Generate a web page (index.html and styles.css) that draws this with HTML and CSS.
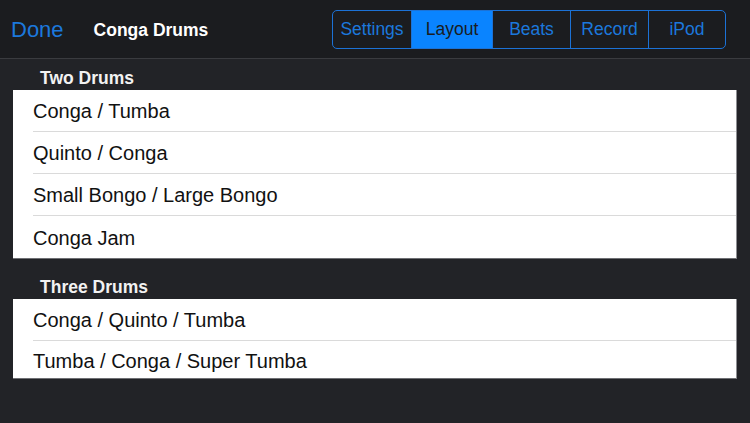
FILE: index.html
```html
<!DOCTYPE html>
<html>
<head>
<meta charset="utf-8">
<link rel="stylesheet" href="styles.css">
</head>
<body>
<div class="navbar">
  <span class="done">Done</span>
  <span class="title">Conga Drums</span>
  <div class="spacer"></div>
  <div class="segmented">
    <div class="seg w79">Settings</div>
    <div class="seg w81 active">Layout</div>
    <div class="seg w78">Beats</div>
    <div class="seg w78">Record</div>
    <div class="seg w77 last">iPod</div>
  </div>
</div>
<div class="content">
  <div class="section-header">Two Drums</div>
  <div class="table">
    <div class="row"><span>Conga / Tumba</span></div>
    <div class="row"><span>Quinto / Conga</span></div>
    <div class="row"><span>Small Bongo / Large Bongo</span></div>
    <div class="row last"><span>Conga Jam</span></div>
  </div>
  <div class="section-header second">Three Drums</div>
  <div class="table">
    <div class="row"><span>Conga / Quinto / Tumba</span></div>
    <div class="row last short"><span>Tumba / Conga / Super Tumba</span></div>
  </div>
</div>
</body>
</html>
```

FILE: styles.css
```css
html, body {
  margin: 0;
  padding: 0;
  background: #222327;
  font-family: "Liberation Sans", Arial, sans-serif;
  width: 750px;
  height: 423px;
  overflow: hidden;
}

.navbar {
  height: 58px;
  background: #1b1c1f;
  border-bottom: 1px solid #3a3b3f;
  display: flex;
  align-items: center;
  padding: 0 24px 0 11px;
  box-sizing: content-box;
}

.done {
  color: #1c78dc;
  font-size: 22px;
  line-height: 58px;
  padding-top: 2px;
}

.title {
  color: #ffffff;
  font-weight: bold;
  font-size: 17.5px;
  margin-left: 30px;
  padding-top: 2px;
}

.spacer {
  flex: 1;
}

.segmented {
  display: flex;
  height: 37px;
  border: 1px solid #1c72d6;
  border-radius: 5px;
  overflow: hidden;
  margin-top: 1px;
}

.seg {
  display: flex;
  align-items: center;
  justify-content: center;
  color: #1c78dc;
  font-size: 17.5px;
  border-right: 1px solid #1c72d6;
  box-sizing: border-box;
}

.seg.last {
  border-right: none;
}

.seg.active {
  background: #0a84ff;
  color: #1a1c22;
}

.w79 { width: 79px; }
.w81 { width: 81px; }
.w78 { width: 78px; }
.w77 { width: 76px; }

.content {
  padding: 0 13px;
}

.section-header {
  height: 31px;
  color: #f2f2f2;
  font-weight: bold;
  font-size: 17.5px;
  padding-left: 27px;
  display: flex;
  align-items: center;
  padding-top: 8px;
  box-sizing: border-box;
}

.section-header.second {
  height: 40px;
  padding-top: 17px;
}

.table {
  background: #ffffff;
  border-right: 1px solid #8d8e92;
  border-bottom: 1px solid #6e6f73;
  box-sizing: border-box;
}

.row {
  height: 42px;
  margin-left: 20px;
  border-bottom: 1px solid #dadada;
  box-sizing: border-box;
  display: flex;
  align-items: center;
  font-size: 20px;
  color: #111111;
  padding-top: 2px;
}

.row.last {
  border-bottom: none;
}

.row.short {
  height: 37px;
  padding-top: 4px;
}
```
